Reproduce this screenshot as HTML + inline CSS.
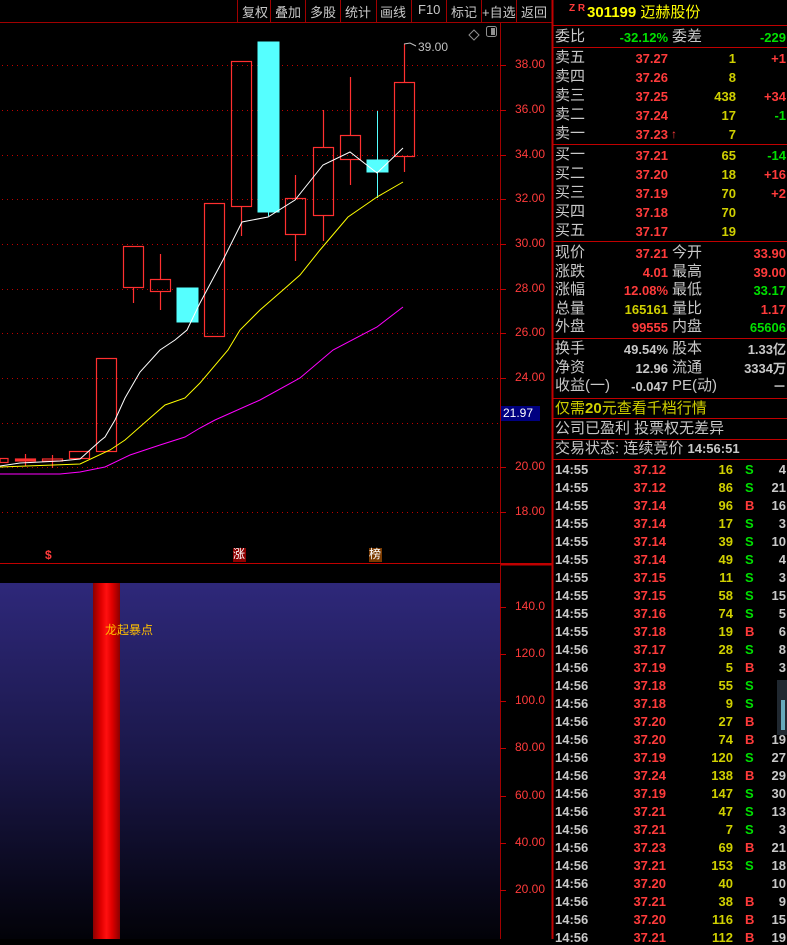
<!DOCTYPE html>
<html><head><meta charset="utf-8"><style>
*{margin:0;padding:0;box-sizing:border-box}
body{width:787px;height:939px;background:#000;overflow:hidden;position:relative;font-family:"Liberation Sans","Noto Sans CJK SC",sans-serif}
.t{position:absolute;white-space:nowrap;line-height:1}
.l{font-size:15px;color:#c0c0c0}
.n{font-size:13px;font-weight:bold;font-family:"Liberation Sans",sans-serif}
.r{color:#ff3b3b}.g{color:#00e000}.y{color:#d0d000}.w{color:#c8c8c8}
.tb{position:absolute;top:2px;font-size:13px;color:#c8c8c8}
</style></head><body>
<svg width="787" height="939" style="position:absolute;left:0;top:0">
<defs>
<linearGradient id="bg" x1="0" y1="0" x2="0" y2="1"><stop offset="0" stop-color="#2e287a"/><stop offset="0.5" stop-color="#1a1748"/><stop offset="1" stop-color="#020208"/></linearGradient>
<linearGradient id="rb" x1="0" y1="0" x2="1" y2="0"><stop offset="0" stop-color="#8a0000"/><stop offset="0.3" stop-color="#e00000"/><stop offset="0.5" stop-color="#ff1010"/><stop offset="0.7" stop-color="#e00000"/><stop offset="1" stop-color="#8a0000"/></linearGradient>
</defs>
<line x1="0" y1="22.5" x2="552" y2="22.5" stroke="#a00000"/>
<g stroke="#a00000">
<line x1="237.5" y1="0" x2="237.5" y2="22"/><line x1="270.5" y1="0" x2="270.5" y2="22"/><line x1="305.5" y1="0" x2="305.5" y2="22"/><line x1="340.5" y1="0" x2="340.5" y2="22"/><line x1="376.5" y1="0" x2="376.5" y2="22"/><line x1="411.5" y1="0" x2="411.5" y2="22"/><line x1="446.5" y1="0" x2="446.5" y2="22"/><line x1="481.5" y1="0" x2="481.5" y2="22"/><line x1="516.5" y1="0" x2="516.5" y2="22"/>
</g>
<line x1="500.5" y1="22" x2="500.5" y2="939" stroke="#a00000"/>
<line x1="552.5" y1="0" x2="552.5" y2="939" stroke="#c00000" stroke-width="2"/>
<line x1="0" y1="563.5" x2="552" y2="563.5" stroke="#c00000"/>
<line x1="501" y1="564.5" x2="552" y2="564.5" stroke="#c00000" stroke-width="2"/>
<g stroke="#c00000" stroke-dasharray="1,4">
<line x1="2" y1="65.5" x2="498" y2="65.5"/><line x1="2" y1="110.5" x2="498" y2="110.5"/><line x1="2" y1="155.5" x2="498" y2="155.5"/><line x1="2" y1="199.5" x2="498" y2="199.5"/><line x1="2" y1="244.5" x2="498" y2="244.5"/><line x1="2" y1="289.5" x2="498" y2="289.5"/><line x1="2" y1="333.5" x2="498" y2="333.5"/><line x1="2" y1="378.5" x2="498" y2="378.5"/><line x1="2" y1="423.5" x2="498" y2="423.5"/><line x1="2" y1="467.5" x2="498" y2="467.5"/><line x1="2" y1="512.5" x2="498" y2="512.5"/>
</g>
<g stroke="#c00000">
<line x1="500" y1="65.5" x2="506" y2="65.5"/><line x1="500" y1="110.5" x2="506" y2="110.5"/><line x1="500" y1="155.5" x2="506" y2="155.5"/><line x1="500" y1="199.5" x2="506" y2="199.5"/><line x1="500" y1="244.5" x2="506" y2="244.5"/><line x1="500" y1="289.5" x2="506" y2="289.5"/><line x1="500" y1="333.5" x2="506" y2="333.5"/><line x1="500" y1="378.5" x2="506" y2="378.5"/><line x1="500" y1="467.5" x2="506" y2="467.5"/><line x1="500" y1="512.5" x2="506" y2="512.5"/>
<line x1="500" y1="607.5" x2="506" y2="607.5"/><line x1="500" y1="654.5" x2="506" y2="654.5"/><line x1="500" y1="701.5" x2="506" y2="701.5"/><line x1="500" y1="748.5" x2="506" y2="748.5"/><line x1="500" y1="796.5" x2="506" y2="796.5"/><line x1="500" y1="843.5" x2="506" y2="843.5"/><line x1="500" y1="890.5" x2="506" y2="890.5"/>
</g>
<rect x="0" y="583" width="500" height="356" fill="url(#bg)"/>
<rect x="93" y="583" width="27" height="356" fill="url(#rb)"/>
<g stroke="#ff3030" fill="none" stroke-width="1.2">
<rect x="0" y="458.5" width="8" height="4" /><rect x="15.5" y="459" width="20" height="2" fill="#ff3030"/><line x1="25.5" y1="454" x2="25.5" y2="466"/>
<rect x="42.5" y="459" width="20" height="2"/><line x1="52.5" y1="455" x2="52.5" y2="468"/>
<rect x="69.5" y="451.5" width="20" height="7"/>
<rect x="96.5" y="358.5" width="20" height="93"/>
<rect x="123.5" y="246.5" width="20" height="41"/><line x1="133.5" y1="288" x2="133.5" y2="303"/>
<rect x="150.5" y="279.5" width="20" height="12"/><line x1="160.5" y1="254" x2="160.5" y2="279"/><line x1="160.5" y1="292" x2="160.5" y2="310"/>
<rect x="204.5" y="203.5" width="20" height="133"/>
<rect x="231.5" y="61.5" width="20" height="145"/><line x1="241.5" y1="207" x2="241.5" y2="236"/>
<rect x="285.5" y="198.5" width="20" height="36"/><line x1="295.5" y1="175" x2="295.5" y2="198"/><line x1="295.5" y1="235" x2="295.5" y2="261"/>
<rect x="313.5" y="147.5" width="20" height="68"/><line x1="323.5" y1="110" x2="323.5" y2="147"/><line x1="323.5" y1="216" x2="323.5" y2="241"/>
<rect x="340.5" y="135.5" width="20" height="24"/><line x1="350.5" y1="77" x2="350.5" y2="135"/><line x1="350.5" y1="160" x2="350.5" y2="185"/>
<rect x="394.5" y="82.5" width="20" height="74"/><line x1="404.5" y1="44" x2="404.5" y2="82"/><line x1="404.5" y1="157" x2="404.5" y2="172"/>
</g>
<g fill="#55ffff" stroke="#55ffff">
<rect x="177" y="288" width="21" height="34"/>
<rect x="258" y="42" width="21" height="170"/>
<line x1="268.5" y1="212" x2="268.5" y2="216"/>
<rect x="367" y="160" width="21" height="12"/><line x1="377.5" y1="111" x2="377.5" y2="198"/>
</g>
<polyline fill="none" stroke="#ffffff" stroke-width="1" points="0,466 20,463 60,461 80,459 100,441 105,437 115,420 125,398 140,372 160,350 175,340 187,330 200,303 223,260 242,222 268,217 295,200 323,165 350,152 377,173 403,148"/>
<polyline fill="none" stroke="#ffff00" stroke-width="1" points="0,467 80,464 110,450 125,440 150,418 165,405 185,398 200,383 228,350 240,330 260,310 283,290 300,275 320,250 348,217 377,197 403,182"/>
<polyline fill="none" stroke="#ff00ff" stroke-width="1" points="0,474 60,474 80,472 105,467 130,455 160,445 185,437 200,428 215,420 260,400 300,378 333,350 377,327 403,307"/>
<polyline fill="none" stroke="#c0c0c0" points="404,44 410,43 416,46"/>
<path d="M474 30 L479 35 L474 40 L469 35 Z" fill="none" stroke="#909090"/>
<rect x="486.5" y="26.5" width="10" height="10" rx="2" fill="none" stroke="#909090"/><rect x="491" y="28" width="4" height="7" fill="#909090"/>
<rect x="501" y="406" width="39" height="15" fill="#000080"/>
<rect x="233" y="548" width="13" height="14" fill="#8b0000"/>
<rect x="369" y="548" width="13" height="14" fill="#7a3a00"/>
<g stroke="#c00000">
<line x1="553" y1="25.5" x2="787" y2="25.5"/><line x1="553" y1="47.5" x2="787" y2="47.5"/><line x1="553" y1="144.5" x2="787" y2="144.5"/><line x1="553" y1="241.5" x2="787" y2="241.5"/><line x1="553" y1="338.5" x2="787" y2="338.5"/><line x1="553" y1="398.5" x2="787" y2="398.5"/><line x1="553" y1="418.5" x2="787" y2="418.5"/><line x1="553" y1="439.5" x2="787" y2="439.5"/><line x1="553" y1="459.5" x2="787" y2="459.5"/>
</g>
<rect x="777" y="680" width="10" height="55" fill="#202830"/>
<rect x="781" y="700" width="4" height="30" fill="#6ab"/>
</svg>

<div class="tb" style="left:242px">复权</div><div class="tb" style="left:275px">叠加</div><div class="tb" style="left:310px">多股</div><div class="tb" style="left:345px">统计</div><div class="tb" style="left:380px">画线</div><div class="tb" style="left:418px">F10</div><div class="tb" style="left:451px">标记</div><div class="tb" style="left:482px">+自选</div><div class="tb" style="left:521px">返回</div>

<div class="t" style="left:418px;top:41px;font-size:12px;color:#c0c0c0">39.00</div>
<div class="t r" style="left:515px;top:58px;font-size:12px">38.00</div>
<div class="t r" style="left:515px;top:103px;font-size:12px">36.00</div>
<div class="t r" style="left:515px;top:148px;font-size:12px">34.00</div>
<div class="t r" style="left:515px;top:192px;font-size:12px">32.00</div>
<div class="t r" style="left:515px;top:237px;font-size:12px">30.00</div>
<div class="t r" style="left:515px;top:282px;font-size:12px">28.00</div>
<div class="t r" style="left:515px;top:326px;font-size:12px">26.00</div>
<div class="t r" style="left:515px;top:371px;font-size:12px">24.00</div>
<div class="t" style="left:503px;top:407px;font-size:12px;color:#fff">21.97</div>
<div class="t r" style="left:515px;top:460px;font-size:12px">20.00</div>
<div class="t r" style="left:515px;top:505px;font-size:12px">18.00</div>
<div class="t r" style="left:515px;top:600px;font-size:12px">140.0</div>
<div class="t r" style="left:515px;top:647px;font-size:12px">120.0</div>
<div class="t r" style="left:515px;top:694px;font-size:12px">100.0</div>
<div class="t r" style="left:515px;top:741px;font-size:12px">80.00</div>
<div class="t r" style="left:515px;top:789px;font-size:12px">60.00</div>
<div class="t r" style="left:515px;top:836px;font-size:12px">40.00</div>
<div class="t r" style="left:515px;top:883px;font-size:12px">20.00</div>
<div class="t r" style="left:45px;top:549px;font-size:12px;font-weight:bold">$</div>
<div class="t" style="left:233px;top:548px;font-size:12px;color:#fff">涨</div>
<div class="t" style="left:369px;top:548px;font-size:12px;color:#fff">榜</div>
<div class="t" style="left:105px;top:624px;font-size:12px;color:#ffc000">龙起暴点</div>

<div class="t r" style="left:569px;top:4px;font-size:10px;font-weight:bold">Z R</div>
<div class="t" style="left:587px;top:5px;font-size:15px;color:#ffff00;font-weight:bold">301199 <span style="font-weight:normal">迈赫股份</span></div>

<div id="rp"></div>
<script>
var h='';function T(x,y,s,c,a,cls){h+='<div class="t '+(cls||'n')+' '+c+'" style="'+(a?'right:'+(787-x)+'px':'left:'+x+'px')+';top:'+y+'px">'+s+'</div>';}
function L(x,y,s,c){T(x,y,s,c||'w',0,'l');}
L(555,29,'委比');T(668,31,'-32.12%','g',1);L(672,29,'委差');T(786,31,'-229','g',1);
var ob=[['卖五','37.27','1','+1','r'],['卖四','37.26','8','',''],['卖三','37.25','438','+34','r'],['卖二','37.24','17','-1','g'],['卖一','37.23','7','',''],['买一','37.21','65','-14','g'],['买二','37.20','18','+16','r'],['买三','37.19','70','+2','r'],['买四','37.18','70','',''],['买五','37.17','19','','']];
var ys=[50,69,88,107,126,147,166,185,204,223];
ob.forEach(function(o,i){var y=ys[i];L(555,y,o[0]);T(668,y+2,o[1],'r',1);T(736,y+2,o[2],'y',1);if(o[3])T(786,y+2,o[3],o[4],1);});
h+='<div class="t r" style="left:671px;top:128px;font-size:12px;font-weight:bold">↑</div>';
var q=[['现价','37.21','r','今开','33.90','r'],['涨跌','4.01','r','最高','39.00','r'],['涨幅','12.08%','r','最低','33.17','g'],['总量','165161','y','量比','1.17','r'],['外盘','99555','r','内盘','65606','g']];
q.forEach(function(o,i){var y=245+i*18.5;L(555,y,o[0]);T(668,y+2,o[1],o[2],1);L(672,y,o[3]);T(786,y+2,o[4],o[5],1);});
var z=[['换手','49.54%','股本','1.33亿'],['净资','12.96','流通','3334万'],['收益(一)','-0.047','PE(动)','－']];
z.forEach(function(o,i){var y=341+i*18.5;L(555,y,o[0]);T(668,y+2,o[1],'w',1);L(672,y,o[2]);T(786,y+2,o[3],'w',1);});
L(555,401,'仅需<b>20</b>元查看千档行情','y');
L(555,421,'公司已盈利 投票权无差异');
L(555,441,'交易状态: 连续竞价 <b style="font-size:13px">14:56:51</b>');
var tk=[['37.12','16','S','4'],['37.12','86','S','21'],['37.14','96','B','16'],['37.14','17','S','3'],['37.14','39','S','10'],['37.14','49','S','4'],['37.15','11','S','3'],['37.15','58','S','15'],['37.16','74','S','5'],['37.18','19','B','6'],['37.17','28','S','8'],['37.19','5','B','3'],['37.18','55','S',''],['37.18','9','S',''],['37.20','27','B',''],['37.20','74','B','19'],['37.19','120','S','27'],['37.24','138','B','29'],['37.19','147','S','30'],['37.21','47','S','13'],['37.21','7','S','3'],['37.23','69','B','21'],['37.21','153','S','18'],['37.20','40','','10'],['37.21','38','B','9'],['37.20','116','B','15'],['37.21','112','B','19']];
tk.forEach(function(o,i){var y=463+i*18;T(555,y,i<10?'14:55':'14:56','w');T(666,y,o[0],'r',1);T(733,y,o[1],'y',1);if(o[2])T(745,y,o[2],o[2]=='S'?'g':'r');if(o[3])T(786,y,o[3],'w',1);});
document.getElementById('rp').innerHTML=h;
</script>
</body></html>
